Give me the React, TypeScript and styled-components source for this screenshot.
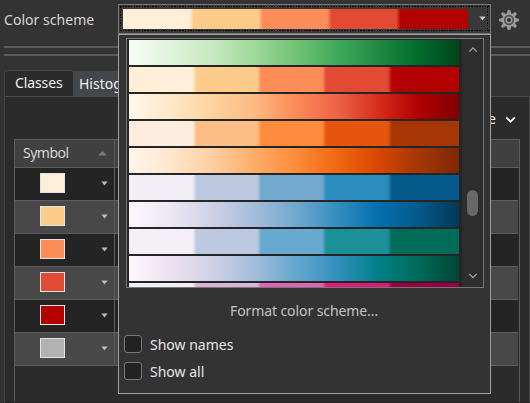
import React from "react";
import styled, { createGlobalStyle } from "styled-components";

const GlobalStyle = createGlobalStyle`
  * { box-sizing: border-box; }
  html, body { margin: 0; background: #333333; overflow: hidden; }
`;

const Page = styled.div`
  width: 530px;
  height: 403px;
  overflow: hidden;
  display: flex;
  flex-direction: column;
  background: #333333;
  color: #dcdcdc;
  font-family: "Noto Sans", "Open Sans", sans-serif;
  font-size: 14px;
  line-height: 20px;
`;

const Label = styled.span<{ $spacing?: number; $color?: string }>`
  letter-spacing: ${(p) => p.$spacing ?? 0}px;
  color: ${(p) => p.$color ?? "#d6d6d6"};
  white-space: nowrap;
`;

const SchemeBar = styled.header`
  display: grid;
  grid-template-columns: 114px 373px 1fr;
  height: 42px;
  padding: 4px 0 0 4px;
  flex: none;
`;

const SchemeLabel = styled.div`
  padding-top: 6px;
`;

const Combo = styled.div`
  position: relative;
  width: 373px;
  height: 30px;
  padding: 1px;
  border: 1px solid #777777;
  background: #393939;
`;

const DashRect = styled.svg`
  position: absolute;
  left: 1px;
  top: 1px;
`;

const ComboContent = styled.div`
  display: flex;
  align-items: center;
  height: 26px;
  padding-left: 3px;
`;

const Ramp = styled.div<{ $image: string; $selected?: boolean }>`
  width: ${(p) => (p.$selected ? 345 : 330)}px;
  height: ${(p) => (p.$selected ? 20 : 25)}px;
  margin-bottom: ${(p) => (p.$selected ? 1 : 2)}px;
  flex: none;
  background: ${(p) => p.$image};
`;

const ComboArrow = styled.svg`
  margin-left: 11px;
  margin-top: -1px;
`;

const Gear = styled.svg`
  margin: 5px 0 0 7px;
`;

const Popup = styled.div`
  position: absolute;
  z-index: 2;
  left: -1px;
  top: 29px;
  width: 373px;
  height: 360px;
  padding: 3px 7px;
  display: flex;
  flex-direction: column;
  background: #333333;
  border: 1px solid #a0a0a0;
`;

const ListBox = styled.div`
  display: flex;
  width: 358px;
  height: 250px;
  flex: none;
  border: 1px solid #777777;
  background: #252525;
  overflow: hidden;
`;

const RampList = styled.div`
  width: 335px;
  padding: 1px 0 0 2px;
  overflow: hidden;
`;

const ScrollBar = styled.div`
  width: 21px;
  display: flex;
  flex-direction: column;
  align-items: center;
  background: #2d2d2d;
  padding: 7px 0 8px;
`;

const Thumb = styled.div`
  width: 11px;
  height: 26px;
  margin: 136px 0 56px;
  border-radius: 6px;
  background: #686868;
  flex: none;
`;

const FormatLink = styled.div`
  text-align: center;
  margin-top: 13px;
  height: 34px;
  padding-right: 1px;
`;

const CheckRow = styled.div`
  display: flex;
  align-items: center;
  gap: 8px;
  height: 20px;
  margin: 0 0 7px -2px;
`;

const CheckBox = styled.span`
  width: 18px;
  height: 18px;
  margin-bottom: 2px;
  border: 1px solid #777777;
  border-radius: 3px;
  background: #222222;
`;

const Splitter = styled.div`
  height: 10px;
  margin: 4px 0 14px 4px;
  border-top: 2px solid #5b5b5b;
  border-bottom: 2px solid #5b5b5b;
  flex: none;
`;

const TabStrip = styled.nav`
  display: flex;
  align-items: flex-end;
  height: 26px;
  padding-left: 4px;
  flex: none;
`;

const Tab = styled.div<{ $active?: boolean }>`
  width: ${(p) => (p.$active ? 70 : 90)}px;
  height: ${(p) => (p.$active ? 27 : 25)}px;
  margin-bottom: ${(p) => (p.$active ? -1 : 0)}px;
  padding: ${(p) => (p.$active ? "2px 0 0 10px" : "2px 0 0 5px")};
  border: 1px solid #464646;
  border-left-width: ${(p) => (p.$active ? 1 : 0)}px;
  border-bottom-width: 0;
  border-radius: ${(p) => (p.$active ? "4px 3px 0 0" : "0")};
  background: ${(p) => (p.$active ? "#2b2b2b" : "#43464a")};
`;

const TabPanel = styled.main`
  flex: 1;
  display: flex;
  flex-direction: column;
  margin-left: 4px;
  padding-left: 9px;
  border: 1px solid #464646;
  border-top-color: #4a4a4a;
  border-bottom: 1px solid #262424;
  background: #2b2b2b;
`;

const PanelTools = styled.div`
  display: flex;
  justify-content: flex-end;
  align-items: center;
  gap: 8px;
  height: 42px;
  padding: 2px 12px 0 0;
  flex: none;
`;

const Table = styled.div`
  flex: 1;
  width: 506px;
  border: 1px solid #5c5c5c;
  border-bottom: 0;
`;

const TableRow = styled.div<{ $tone: string; $head?: boolean }>`
  display: grid;
  grid-template-columns: 100px 1fr;
  width: ${(p) => (p.$head ? 504 : 503)}px;
  height: ${(p) => (p.$head ? 28 : 33)}px;
  background: ${(p) => p.$tone};
  border-bottom: 1px solid #5c5c5c;
`;

const SymbolCell = styled.div<{ $head?: boolean }>`
  display: flex;
  align-items: center;
  justify-content: space-between;
  padding: ${(p) => (p.$head ? "0 7px 1px 8px" : "0 6px 2px 25px")};
  border-right: 1px solid #5c5c5c;
`;

const Swatch = styled.span<{ $color: string }>`
  width: 25px;
  height: 20px;
  border: 1px solid #e4e4e4;
  background: ${(p) => p.$color};
`;

const discrete = (c: string[], cuts = [20, 39.6, 59.3, 79.2]) => {
  const stops = [`${c[0]} 0`];
  cuts.forEach((cut, i) => stops.push(`${c[i]} ${cut - 0.8}%`, `${c[i + 1]} ${cut + 0.5}%`));
  return `linear-gradient(90deg, ${stops.join(", ")})`;
};
const smooth = (c: string[]) => `linear-gradient(90deg, ${c.join(", ")})`;

const reds = ["#ffefd9", "#fdcc8a", "#fc8d59", "#e34a33", "#b30000"];

const ramps = [
  smooth(["#f7fcf5", "#e0f3db", "#c7e9c0", "#a1d99b", "#74c476", "#41ab5d", "#238b45", "#006d2c", "#00441b"]),
  discrete(reds),
  smooth(["#fff7ec", "#fee8c8", "#fdd49e", "#fdbb84", "#fc8d59", "#ef6548", "#d7301f", "#b30000", "#7f0000"]),
  discrete(["#feedde", "#fdbe85", "#fd8d3c", "#e6550d", "#a63603"]),
  smooth(["#fff5eb", "#fee6ce", "#fdd0a2", "#fdae6b", "#fd8d3c", "#f16913", "#d94801", "#a63603", "#7f2704"]),
  discrete(["#f1eef6", "#bdc9e1", "#74a9cf", "#2b8cbe", "#045a8d"]),
  smooth(["#fff7fb", "#ece7f2", "#d0d1e6", "#a6bddb", "#74a9cf", "#3690c0", "#0570b0", "#045a8d", "#023858"]),
  discrete(["#f6eff7", "#bdc9e1", "#67a9cf", "#1c9099", "#016c59"]),
  smooth(["#fff7fb", "#ece2f0", "#d0d1e6", "#a6bddb", "#67a9cf", "#3690c0", "#02818a", "#016c59", "#014636"]),
  discrete(["#f1eef6", "#d7b5d8", "#df65b0", "#dd1c77", "#980043"]),
];

const DropArrow = () => (
  <svg width="7" height="5" viewBox="0 0 7 5">
    <path d="M.4.6h6.2L3.5 4.4z" fill="#bcbcbc" />
  </svg>
);

const Chevron = ({ up, bright }: { up?: boolean; bright?: boolean }) => (
  <svg width={bright ? 13 : 12} height={bright ? 9 : 8} viewBox="0 0 12 8">
    <path
      d={up ? "M2 6l4-4 4 4" : "M2 2l4 4 4-4"}
      fill="none"
      stroke={bright ? "#eeeeee" : "#a4a4a4"}
      strokeWidth={bright ? 1.8 : 1.5}
    />
  </svg>
);

const teeth = [0, 45, 90, 135, 180, 225, 270, 315];

export default function App() {
  return (
    <>
      <GlobalStyle />
      <Page>
        <SchemeBar>
          <SchemeLabel>
            <Label $spacing={0.04}>Color scheme</Label>
          </SchemeLabel>
          <Combo>
            <DashRect width="369" height="26" shapeRendering="crispEdges">
              <path
                d="M0 .5H369M0 24.5H369M.5 0V25M367.5 0V25"
                fill="none"
                stroke="#080808"
                strokeDasharray="1.5 1.2"
              />
            </DashRect>
            <ComboContent>
              <Ramp $selected $image={discrete(reds, [20, 40, 60, 80])} />
              <ComboArrow width="7" height="5" viewBox="0 0 7 5">
                <path d="M.3.5h6.4L3.5 4.5z" fill="#c6c6c6" />
              </ComboArrow>
            </ComboContent>
            <Popup>
              <ListBox>
                <RampList>
                  {ramps.map((image, i) => (
                    <Ramp key={i} $image={image} />
                  ))}
                </RampList>
                <ScrollBar>
                  <Chevron up />
                  <Thumb />
                  <Chevron />
                </ScrollBar>
              </ListBox>
              <FormatLink>
                <Label $color="#c2c2c2" $spacing={-0.09}>Format color scheme...</Label>
              </FormatLink>
              {["Show names", "Show all"].map((name) => (
                <CheckRow key={name}>
                  <CheckBox />
                  <Label $color="#e6e6e6">{name}</Label>
                </CheckRow>
              ))}
            </Popup>
          </Combo>
          <Gear width="22" height="22" viewBox="-11 -11 22 22">
            <g fill="#999999">
              {teeth.map((a) => (
                <path key={a} d="M-2.2-6L-1.3-10h2.6L2.2-6z" transform={`rotate(${a})`} />
              ))}
            </g>
            <circle r="6" fill="#515151" stroke="#a0a0a0" strokeWidth="1.7" />
            <circle r="2.8" fill="#303030" stroke="#a0a0a0" strokeWidth="1.4" />
          </Gear>
        </SchemeBar>
        <Splitter />
        <TabStrip>
          <Tab $active>
            <Label $color="#f0f0f0" $spacing={-0.1}>Classes</Label>
          </Tab>
          <Tab>
            <Label $color="#f0f0f0">Histogram</Label>
          </Tab>
        </TabStrip>
        <TabPanel>
          <PanelTools>
            <Label $color="#eeeeee">More</Label>
            <Chevron bright />
          </PanelTools>
          <Table>
            <TableRow $head $tone="#404040">
              <SymbolCell $head>
                <Label $spacing={-0.5}>Symbol</Label>
                <svg width="9" height="5" viewBox="0 0 9 5">
                  <path d="M0 4.5L4.5 0 9 4.5z" fill="#797979" />
                </svg>
              </SymbolCell>
            </TableRow>
            {[...reds, "#b2b2b2"].map((color, i) => (
              <TableRow key={color} $tone={i % 2 ? "#484848" : "#242424"}>
                <SymbolCell>
                  <Swatch $color={color} />
                  <DropArrow />
                </SymbolCell>
              </TableRow>
            ))}
          </Table>
        </TabPanel>
      </Page>
    </>
  );
}
